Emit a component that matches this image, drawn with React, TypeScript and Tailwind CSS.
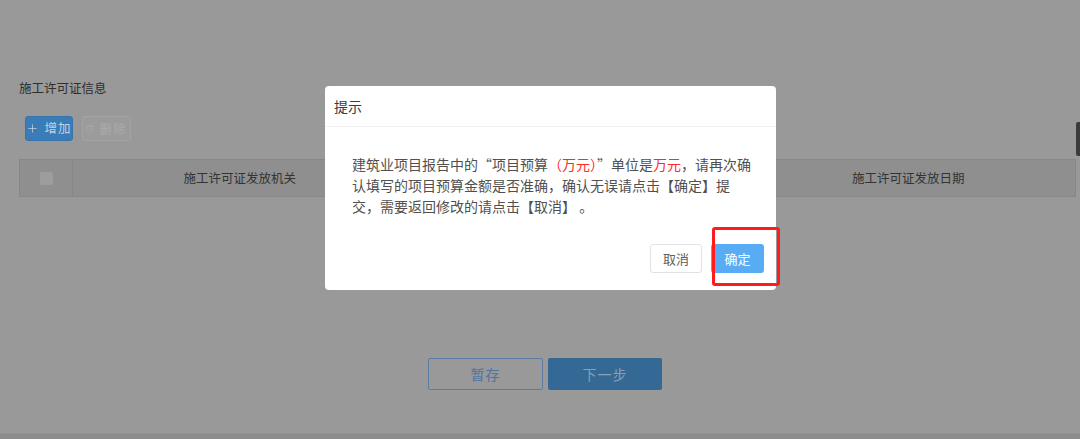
import React from "react";
import { Plus, Trash2 } from "lucide-react";

export default function App() {
  const font = { fontFamily: '"Noto Sans CJK SC", "Noto Sans", sans-serif' };
  return (
    <div
      className="relative w-[1080px] h-[439px] overflow-hidden bg-[#999999] flex flex-col"
      style={font}
    >
      {/* page content (dimmed) */}
      <div className="pl-[19px] pr-[4px] pt-[80px] flex flex-col">
        <div className="text-[12.5px] leading-[16px] text-[#2e2e2e]">施工许可证信息</div>
        <div className="mt-[20px] flex gap-[9px] pl-[6px]">
          <div className="w-[48px] h-[25px] rounded-[3px] bg-[#3a7cb8] border border-[#3674ad] flex items-center justify-center gap-[5px] text-[#c3d2e0] text-[12.5px]">
            <Plus size={13} strokeWidth={1.4} />
            <span className="tracking-[1px]">增加</span>
          </div>
          <div className="w-[49px] h-[25px] rounded-[3px] bg-[#9b9b9b] border border-[#a4a4a4] flex items-center justify-center gap-[4px] text-[#ababab] text-[12px]">
            <Trash2 size={10} strokeWidth={1.6} />
            <span className="tracking-[2px]">删除</span>
          </div>
        </div>
        <div className="mt-[18px] h-[38px] flex bg-[#8f8f8f] border border-[#878787] text-[12.5px] text-[#333333]">
          <div className="w-[53px] shrink-0 border-r border-[#878787] flex items-center justify-center">
            <div className="w-[13px] h-[13px] rounded-[2px] bg-[#9d9d9d]" />
          </div>
          <div className="flex-1 border-r border-[#878787] flex items-center justify-center">
            施工许可证发放机关
          </div>
          <div className="flex-1 border-r border-[#878787]" />
          <div className="flex-1 flex items-center justify-center">施工许可证发放日期</div>
        </div>
        <div className="mt-[161px] flex justify-center gap-[5px] pr-[5px]">
          <div className="w-[115px] h-[32px] rounded-[2px] border border-[#5a7ea3] flex items-center justify-center text-[14px] text-[#4d74a0] tracking-[1px]">
            暂存
          </div>
          <div className="w-[114px] h-[32px] rounded-[2px] bg-[#336994] flex items-center justify-center text-[14px] text-[#8a9fb3] tracking-[1px]">
            下一步
          </div>
        </div>
      </div>
      <div className="mt-auto h-[6px] bg-[#8c8c8c] border-t border-[#939393]" />

      {/* scrollbar thumb */}
      <div className="absolute right-0 top-[122px] w-[4px] h-[34px] rounded-l-[2px] bg-[#3b3b3b]" />

      {/* dialog */}
      <div className="absolute left-[325px] top-[86px] w-[451px] bg-white rounded-[4px] flex flex-col">
        <div className="h-[41px] border-b border-[#f2f2f2] pl-[9px] flex items-center text-[14px] text-[#3a3a3a]">
          提示
        </div>
        <div className="pt-[27px] pl-[27px] text-[14px] leading-[21px] text-[#505050] whitespace-nowrap">
          <div>
            建筑业项目报告中的“项目预算<span className="text-[#ff2b2b]">（万元）</span>”单位是
            <span className="text-[#ff2b2b]">万元</span>，请再次确
          </div>
          <div>认填写的项目预算金额是否准确，确认无误请点击【确定】提</div>
          <div>交，需要返回修改的请点击【取消】 。</div>
        </div>
        <div className="mt-[27px] pb-[17px] pr-[12px] flex justify-end gap-[9px]">
          <div className="w-[52px] h-[29px] rounded-[3px] border border-[#e2e2e2] bg-white flex items-center justify-center text-[13px] text-[#606060]">
            取消
          </div>
          <div className="w-[53px] h-[29px] rounded-[3px] bg-[#58acf4] flex items-center justify-center text-[13px] text-white">
            确定
          </div>
        </div>
      </div>

      {/* red annotation box */}
      <div className="absolute left-[712px] top-[227px] w-[68px] h-[59px] border-[3px] border-[#ff1c1c] rounded-[3px]" />
    </div>
  );
}
